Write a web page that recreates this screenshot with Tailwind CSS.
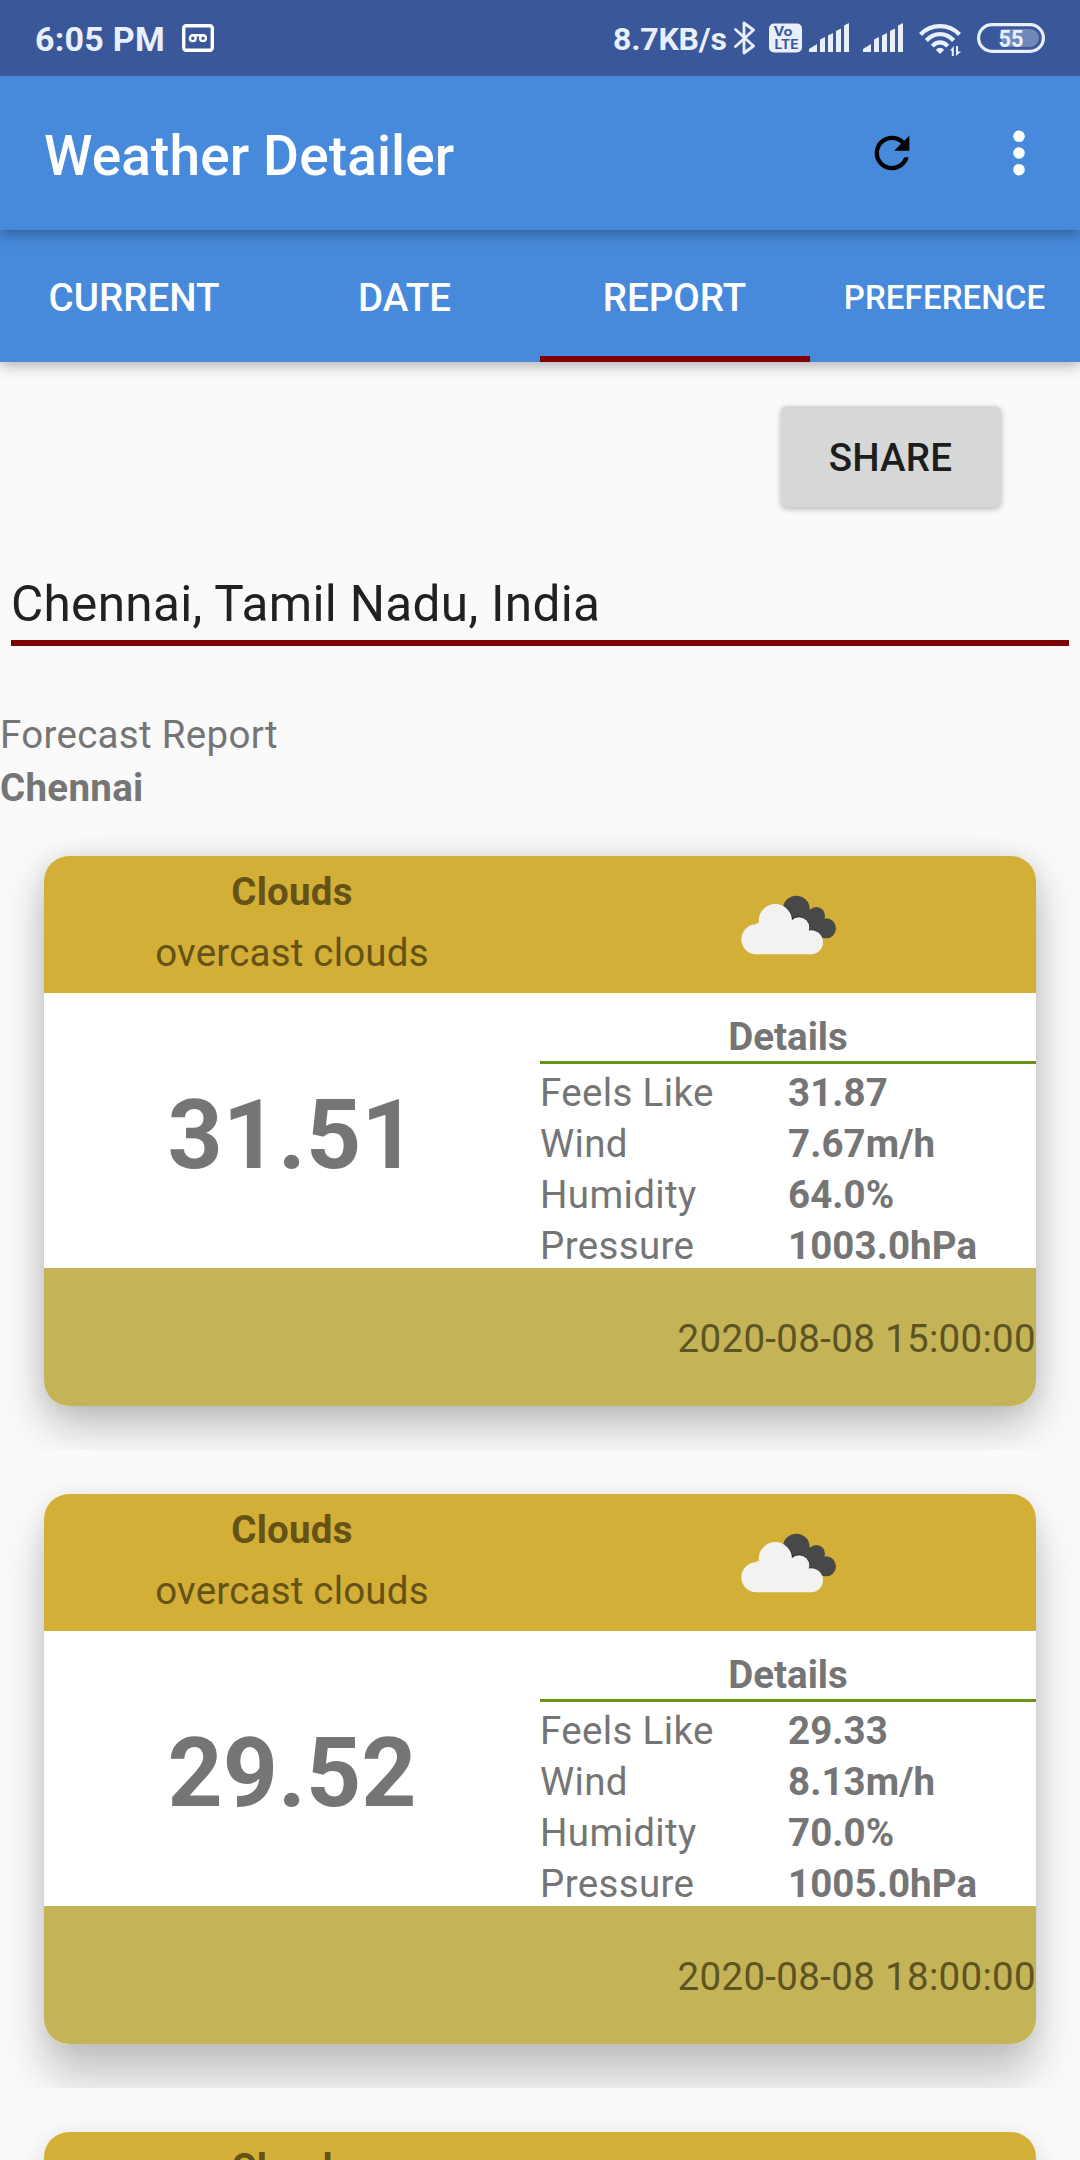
<!DOCTYPE html>
<html lang="en">
<head>
<meta charset="utf-8">
<title>Weather Detailer</title>
<script src="https://cdn.jsdelivr.net/npm/@tailwindcss/browser@4"></script>
</head>
<body class="w-[1080px] h-[2160px] overflow-hidden bg-[#fafafa] font-['Roboto',sans-serif] text-[38.5px] text-[#757575]">
<div class="flex flex-col h-[2160px] overflow-hidden">
  <!-- Status bar -->
  <div class="relative z-30 flex-none h-[76px] bg-[#3a5899] text-[#e9effc] flex items-center pl-[35px] pr-[35px]">
    <span class="text-[34px] font-bold tracking-[0.25px] leading-[40px] pt-[1px] w-[147px] whitespace-nowrap">6:05 PM</span>
    <svg class="w-8 h-7" viewBox="0 0 32 28" fill="none" stroke="#fff"><rect x="1.7" y="1.7" width="28.6" height="24.6" rx="2.5" stroke-width="3.4"/><circle cx="10.8" cy="14.2" r="2.9" stroke-width="2.4"/><circle cx="21" cy="14.2" r="2.9" stroke-width="2.4"/><path d="M10.8 11.2H21" stroke-width="2.2"/></svg>
    <span class="ml-auto text-[32px] font-bold tracking-[-0.2px] leading-[38px] pt-[1px] w-[121px] whitespace-nowrap">8.7KB/s</span>
    <svg class="w-[22px] h-[34px]" viewBox="0 0 22 34" fill="none" stroke="currentColor" stroke-width="2.8" stroke-linejoin="round" stroke-linecap="round"><path d="M1.5 8.5 19.5 25 10 32V2L19.5 9 1.5 25.5"/></svg>
    <svg class="ml-[13px] w-[33px] h-[30px]" viewBox="0 0 33 30"><rect width="33" height="29" y=".5" rx="5" fill="currentColor"/><g fill="#3a5899" font-family="Inter, sans-serif" font-weight="700"><text x="4.5" y="13" font-size="12.500" textLength="19" lengthAdjust="spacingAndGlyphs">Vo</text><text x="5.500" y="26.200" font-size="13" textLength="24" lengthAdjust="spacingAndGlyphs">LTE</text></g></svg>
    <svg class="ml-[7px] w-[40px] h-[30px]" viewBox="0 0 40 30" fill="currentColor"><path d="M0 29v-3l8-5v8zM11 29V16.500l5-2.500v15zM19 29V12.500l5-2.500v19zM27 29V8l5-2.500v23.500zM35 29V2.500L40 0v29z"/></svg>
    <svg class="ml-[14px] w-[40px] h-[30px]" viewBox="0 0 40 30" fill="currentColor"><path d="M0 29v-3l8-5v8zM11 29V16.500l5-2.500v15zM19 29V12.500l5-2.500v19zM27 29V8l5-2.500v23.500zM35 29V2.500L40 0v29z"/></svg>
    <svg class="ml-4 w-[43px] h-[34px] mt-[3px]" viewBox="0 0 43 34" fill="none" stroke="currentColor" stroke-width="4.200"><path d="M1.500 11.500C12 .3 30 .3 40.500 11.500M7.300 17.500c8-8.500 19.400-8.500 27.400 0M13.300 23.200c4.600-5 10.800-5 15.400 0"/><path d="M21 31l-4-4c2-3 6-3 8 0z" fill="currentColor" stroke="none"/><path d="M31 27.500l3.800-4.500v10h-2v-5.500zM37 33V23h2v5.500h3.200z" fill="currentColor" stroke="none"/></svg>
    <svg class="ml-[15px] w-[68px] h-[30px]" viewBox="0 0 68 30"><rect x="1.600" y="1.600" width="64.800" height="26.800" rx="13.400" fill="none" stroke="currentColor" stroke-width="3.200"/><path d="M24 6h29a9 9 0 0 1 0 18H24z" fill="#7188b9"/><text x="34" y="23.500" text-anchor="middle" font-size="24" font-weight="700" textLength="25" lengthAdjust="spacingAndGlyphs" fill="currentColor">55</text></svg>
  </div>
  <!-- Toolbar -->
  <header class="relative z-20 flex-none h-[154px] bg-[#478adb] shadow-[0_3px_14px_rgba(0,0,0,0.36)] flex items-center justify-between pl-11 pr-[55px]">
    <h1 class="text-[55px] font-medium text-white leading-[64px] tracking-[0.12px] pt-[6px]">Weather Detailer</h1>
    <div class="flex items-center gap-[95px]">
      <svg class="w-[52px] h-[52px]" viewBox="0 0 24 24"><path d="M17.650 6.350A7.958 7.958 0 0 0 12 4a8 8 0 1 0 7.730 10h-2.080A5.990 5.990 0 0 1 12 18a6 6 0 1 1 0-12c1.660 0 3.140.69 4.220 1.780L13 11h7V4z"/></svg>
      <svg class="w-3 h-[46px]" viewBox="0 0 12 46" fill="#fff"><circle cx="6" cy="6.300" r="5.800"/><circle cx="6" cy="23" r="5.800"/><circle cx="6" cy="39.700" r="5.800"/></svg>
    </div>
  </header>
  <!-- Tabs -->
  <nav class="relative z-10 flex-none h-[132px] bg-[#478adb] shadow-[0_3px_14px_rgba(0,0,0,0.32)] grid grid-cols-4 text-white font-medium leading-[45px] text-center">
    <div class="flex items-center justify-center pt-[2px] pr-[2px]">CURRENT</div>
    <div class="flex items-center justify-center pt-[2px] pr-[1px]">DATE</div>
    <div class="flex items-center justify-center pt-[8px] pr-[1px] border-b-[6px] border-[#7f0000]">REPORT</div>
    <div class="flex items-center justify-center pt-[2px] pr-[1px] text-[33px] tracking-[0.1px]">PREFERENCE</div>
  </nav>
  <main class="flex flex-col">
    <button class="mt-11 ml-[780.5px] w-[220px] h-[100.5px] rounded-[6px] bg-[#d6d8d7] text-[#1d1d1d] font-medium tracking-[0.2px] pt-1 shadow-[0_2px_6px_rgba(0,0,0,0.27)]">SHARE</button>
    <div class="mt-[68.5px] mx-[11px] h-[71px] border-b-[6px] border-[#7f0000] text-[49.5px] leading-[58px] tracking-[0.32px] text-[#212121]">Chennai, Tamil Nadu, India</div>
    <div class="mt-[62px] h-[104px] leading-[53px] tracking-[0.3px]">
      <p>Forecast Report</p>
      <p class="font-bold">Chennai</p>
    </div>
    <div id="forecast" class="flex flex-col"></div>
  </main>
</div>
<script>
const entries = [
  { temp: '31.51', feels: '31.87', wind: '7.67m/h', humidity: '64.0%', pressure: '1003.0hPa', time: '2020-08-08 15:00:00', shadow: 'shadow-[0_19px_44px_rgba(0,0,0,0.25),0_0_22px_rgba(0,0,0,0.08)]' },
  { temp: '29.52', feels: '29.33', wind: '8.13m/h', humidity: '70.0%', pressure: '1005.0hPa', time: '2020-08-08 18:00:00', shadow: 'shadow-[0_32px_44px_rgba(0,0,0,0.22),0_0_22px_rgba(0,0,0,0.07)]' },
  { temp: '28.90', feels: '28.75', wind: '7.90m/h', humidity: '73.0%', pressure: '1005.0hPa', time: '2020-08-08 21:00:00', shadow: 'shadow-[0_36px_44px_rgba(0,0,0,0.22),0_0_22px_rgba(0,0,0,0.07)]' },
];
const row = (label, value) => `
  <dl class="flex h-[51px] leading-[58px]"><dt class="w-[248px] tracking-[0.35px]">${label}</dt><dd class="font-bold tracking-[0.08px]">${value}</dd></dl>`;
document.getElementById('forecast').innerHTML = entries.map(e => `
  <div class="flex-none h-[638px] px-11 pt-11 overflow-hidden">
    <article class="w-[992px] h-[549.5px] rounded-[25px] ${e.shadow}">
      <div class="w-full h-full rounded-[25px] overflow-hidden bg-white flex flex-col">
        <div class="flex-none h-[137px] bg-[#d3af37] text-[#645216] grid grid-cols-2">
          <div class="text-center tracking-[0.2px]">
            <p class="h-[61px] leading-[72px] font-bold">Clouds</p>
            <p class="h-[61px] leading-[72px]">overcast clouds</p>
          </div>
          <div class="flex items-center justify-center">
            <svg class="w-[140px] h-[90px]" viewBox="-6 0 420 270">
              <g fill="#484848"><circle cx="229" cy="87" r="40"/><circle cx="289" cy="107" r="26"/><circle cx="318" cy="145" r="30"/><path d="M215 90h80v40l20 45-60-25z"/></g>
              <g fill="#2c2c2c"><path d="M190 77a52 52 0 0 1 28 37 34 34 0 0 1 51 36 39 39 0 0 1 37 25l-30 8-90-45z"/></g>
              <g fill="#f2f2f0"><circle cx="166" cy="122" r="50"/><circle cx="109" cy="178" r="45"/><circle cx="237" cy="143" r="31"/><circle cx="273" cy="187" r="36"/><path d="M109 130h59l70 10 35 40v43H109z"/></g>
            </svg>
          </div>
        </div>
        <div class="flex-none h-[275px] grid grid-cols-2">
          <div class="flex items-center justify-center pt-[10px] text-[96.25px] leading-[113px] font-bold">${e.temp}</div>
          <div class="pt-[17px]">
            <h2 class="h-[54px] leading-[54px] text-center font-bold border-b-3 border-[#6a9516]">Details</h2>
            ${row('Feels Like', e.feels)}${row('Wind', e.wind)}${row('Humidity', e.humidity)}${row('Pressure', e.pressure)}
          </div>
        </div>
        <div class="flex-1 bg-[#c4b357] text-[#5d5423] flex items-center justify-end pt-1 tracking-[0.32px]">${e.time}</div>
      </div>
    </article>
  </div>`).join('');
</script>
</body>
</html>
